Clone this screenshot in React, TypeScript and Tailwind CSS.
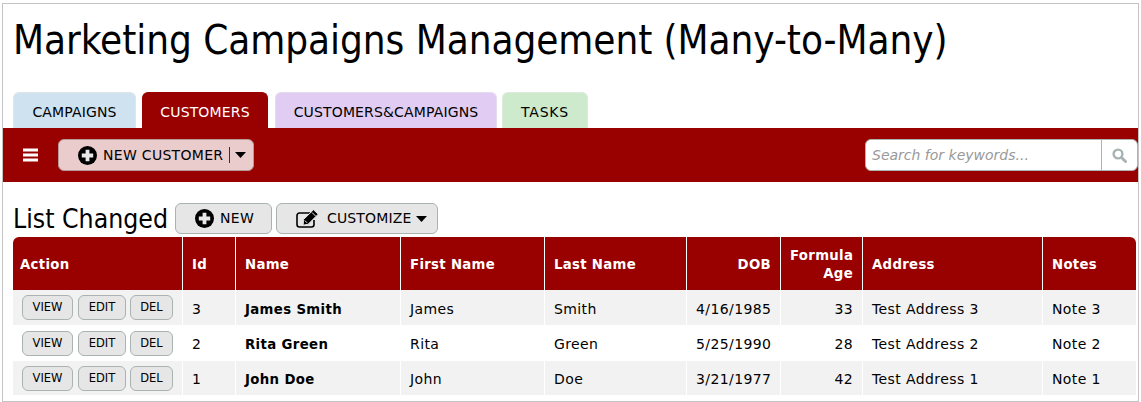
import React from "react";

const rows = [
  { id: 3, name: "James Smith", first: "James", last: "Smith", dob: "4/16/1985", age: 33, addr: "Test Address 3", note: "Note 3", h: "h-[35px] [&>td:not(:first-child)]:!pt-[4px]", bg: "bg-[#f2f2f2]" },
  { id: 2, name: "Rita Green", first: "Rita", last: "Green", dob: "5/25/1990", age: 28, addr: "Test Address 2", note: "Note 2", h: "h-[36px]", bg: "bg-white" },
  { id: 1, name: "John Doe", first: "John", last: "Doe", dob: "3/21/1977", age: 42, addr: "Test Address 1", note: "Note 1", h: "h-[34px]", bg: "bg-[#f2f2f2]" },
];

const PlusCircle = ({ size }: { size: number }) => (
  <svg width={size} height={size} viewBox="0 0 20 20" className="shrink-0">
    <circle cx="10" cy="10" r="10" fill="#000" />
    <path d="M8 4h4v4h4v4h-4v4H8v-4H4V8h4z" fill="#e8e8e8" />
  </svg>
);

const Caret = () => (
  <svg width="11" height="6" viewBox="0 0 11 6" className="shrink-0"><path d="M0 0h11L5.5 6z" fill="#000" /></svg>
);

const Tab = ({ label, cls }: { label: string; cls: string }) => (
  <div className={`h-[36px] flex items-center justify-center pt-[3px] rounded-t-[6px] border border-b-0 text-[14px] tracking-[0.15px] ${cls}`}>{label}</div>
);

const SmallBtn = ({ label, w }: { label: string; w: string }) => (
  <button className={`${w} h-[25px] pt-[1px] rounded-[6px] border border-[#aab2b2] bg-[#e6e6e6] text-[11.5px] text-black flex items-center justify-center`}>{label}</button>
);

const Th = ({ children, cls = "" }: { children: React.ReactNode; cls?: string }) => (
  <th className={`border-r border-white last:border-r-0 bg-[#990000] text-white font-bold text-[13.3px] tracking-[0.3px] leading-[18px] align-middle px-[9px] pt-[2px] ${cls}`}>{children}</th>
);

const Td = ({ children, cls = "" }: { children: React.ReactNode; cls?: string }) => (
  <td className={`border-r border-white last:border-r-0 text-black px-[9px] pt-[2px] align-middle ${cls}`}>{children}</td>
);

export default function App() {
  return (
    <div className="w-[1141px] h-[402px] bg-white pt-[3px] pl-[2px] overflow-hidden font-['DejaVu_Sans',sans-serif]">
      <div className="w-[1137px] h-[399px] border border-[#c4c4c4] flex flex-col">
        <h1 className="mt-[13px] ml-[10px] h-[47px] text-[40px] tracking-[-0.05px] leading-[47px] text-black font-['DejaVu_Sans_Condensed','DejaVu_Sans',sans-serif] [font-stretch:condensed]">Marketing Campaigns Management (Many-to-Many)</h1>
        <div className="flex ml-[10px] mt-[28px] h-[36px]">
          <Tab label="CAMPAIGNS" cls="w-[123px] bg-[#cfe2f0] border-[#dfe6ea] text-black" />
          <Tab label="CUSTOMERS" cls="ml-[6px] w-[126px] bg-[#990000] border-[#990000] text-white" />
          <Tab label="CUSTOMERS&CAMPAIGNS" cls="ml-[7px] w-[222px] bg-[#e1cdf3] border-[#e6dcef] text-black" />
          <Tab label="TASKS" cls="ml-[5px] w-[86px] bg-[#cdeacd] border-[#dcebdc] text-black !tracking-[0.8px]" />
        </div>
        <div className="h-[54px] bg-[#990000] flex items-center pl-[20px]">
          <svg width="15" height="14" viewBox="0 0 15 14" className="shrink-0"><path d="M0 0.5h15v3H0zM0 5.5h15v3H0zM0 10.5h15v3H0z" fill="#fff" /></svg>
          <button className="ml-[20px] w-[196px] h-[32px] rounded-[6px] border border-[#b59a9a] bg-[#ebcccc] flex items-center pl-[19px] text-[14px] tracking-[0.3px] text-black">
            <PlusCircle size={19} />
            <span className="ml-[6px]">NEW CUSTOMER</span>
            <span className="ml-[6px] w-px h-[16px] bg-[#333]" />
            <span className="ml-[5px]"><Caret /></span>
          </button>
          <div className="ml-auto w-[273px] h-[32px] rounded-[6px] border border-[#aab2b2] bg-white flex items-center">
            <span className="flex-1 pl-[6px] text-[14px] italic text-[#999]">Search for keywords...</span>
            <span className="w-[36px] h-full border-l border-[#aab2b2] flex items-center justify-center">
              <svg width="15" height="15" viewBox="0 0 15 15"><circle cx="6" cy="6" r="4.4" fill="none" stroke="#a9b3b3" strokeWidth="2.4" /><path d="M9.5 9.5L13.5 13.5" stroke="#a9b3b3" strokeWidth="3" strokeLinecap="round" /></svg>
            </span>
          </div>
        </div>
        <div className="flex items-center ml-[10px] mt-[20px] h-[32px]">
          <span className="w-[154px] pt-[1px] text-[26.4px] whitespace-nowrap leading-[32px] text-black font-['DejaVu_Sans_Condensed','DejaVu_Sans',sans-serif] [font-stretch:condensed]">List Changed</span>
          <button className="ml-[8px] w-[97px] h-[31px] pt-[1px] rounded-[6px] border border-[#aab2b2] bg-[#e6e6e6] flex items-center pl-[19px] text-[14px] tracking-[0.3px] text-black">
            <PlusCircle size={19} />
            <span className="ml-[6px]">NEW</span>
          </button>
          <button className="ml-[4px] w-[162px] h-[31px] pt-[1px] rounded-[6px] border border-[#aab2b2] bg-[#e6e6e6] flex items-center pl-[19px] text-[14px] tracking-[0.15px] text-black">
            <svg width="24" height="20" viewBox="0 0 24 20" className="shrink-0">
              <path d="M18 11v4.500a2.500 2.500 0 0 1-2.500 2.500H3.500A2.500 2.500 0 0 1 1 15.500v-9A2.500 2.500 0 0 1 3.500 4H14" fill="none" stroke="#000" strokeWidth="1.600" />
              <path d="M7.500 10.500L17.500 .7l4.700 4.500-10 10-5 1z" fill="#000" stroke="#e6e6e6" strokeWidth="1" />
              <path d="M16 3.500l3.500 3.500M8.800 11.500l2.400 2.400" stroke="#e6e6e6" strokeWidth="1" fill="none" />
            </svg>
            <span className="ml-[7px]">CUSTOMIZE</span>
            <span className="ml-[5px]"><Caret /></span>
          </button>
        </div>
        <table className="ml-[10px] mt-[3px] w-[1123px] table-fixed border-separate border-spacing-0">
          <colgroup>
            <col className="w-[170px]" /><col className="w-[53px]" /><col className="w-[165px]" /><col className="w-[144px]" />
            <col className="w-[142px]" /><col className="w-[94px]" /><col className="w-[82px]" /><col className="w-[180px]" /><col className="w-[93px]" />
          </colgroup>
          <thead>
            <tr className="h-[53px]">
              <Th cls="text-left rounded-tl-[6px] !pl-[7px]">Action</Th>
              <Th cls="text-left">Id</Th>
              <Th cls="text-left">Name</Th>
              <Th cls="text-left">First Name</Th>
              <Th cls="text-left">Last Name</Th>
              <Th cls="text-right">DOB</Th>
              <Th cls="text-right">Formula Age</Th>
              <Th cls="text-left">Address</Th>
              <Th cls="text-left rounded-tr-[6px]">Notes</Th>
            </tr>
          </thead>
          <tbody>
            {rows.map((r) => (
              <tr key={r.id} className={`${r.h} ${r.bg}`}>
                <td className="border-r border-white pl-[9px] pr-0 align-middle">
                  <div className="flex">
                    <SmallBtn label="VIEW" w="w-[51px]" />
                    <div className="ml-[5px]"><SmallBtn label="EDIT" w="w-[48px]" /></div>
                    <div className="ml-[4px]"><SmallBtn label="DEL" w="w-[43px]" /></div>
                  </div>
                </td>
                <Td cls="text-[14px] tracking-[0.4px]">{r.id}</Td>
                <Td cls="text-[13.3px] tracking-[0.35px] font-bold pt-[3px]">{r.name}</Td>
                <Td cls="text-[14px] tracking-[0.4px]">{r.first}</Td>
                <Td cls="text-[14px] tracking-[0.4px]">{r.last}</Td>
                <Td cls="text-[14px] tracking-[0.4px] text-right">{r.dob}</Td>
                <Td cls="text-[14px] tracking-[0.4px] text-right">{r.age}</Td>
                <Td cls="text-[14px] tracking-[0.4px]">{r.addr}</Td>
                <Td cls="text-[14px] tracking-[0.4px]">{r.note}</Td>
              </tr>
            ))}
          </tbody>
        </table>
      </div>
    </div>
  );
}
